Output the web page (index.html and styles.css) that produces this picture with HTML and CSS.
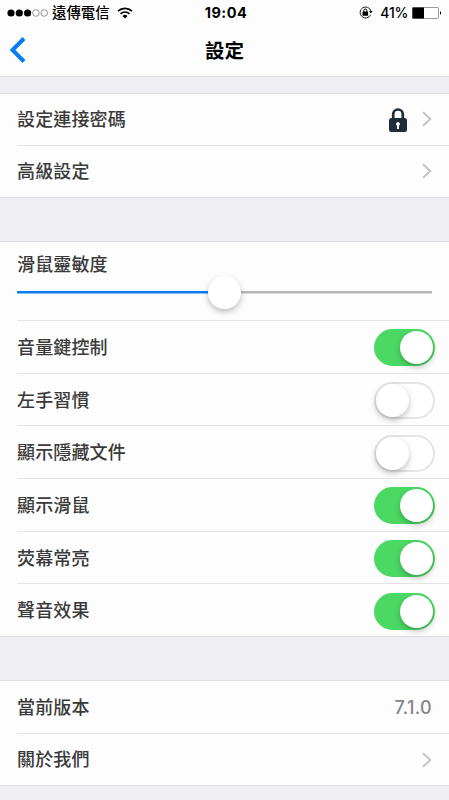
FILE: index.html
```html
<!DOCTYPE html>
<html lang="zh-Hant">
<head>
<meta charset="utf-8">
<title>設定</title>
<link rel="stylesheet" href="styles.css">
</head>
<body>
<header class="header">
  <div class="status">
    <div class="status-left">
      <svg class="signal" width="41" height="10" viewBox="0 0 41 10"><g fill="#000"><circle cx="4" cy="5" r="3.6"/><circle cx="12.3" cy="5" r="3.6"/><circle cx="20.6" cy="5" r="3.6"/></g><g fill="none" stroke="#555" stroke-width=".6"><circle cx="28.9" cy="5" r="3.3"/><circle cx="37.2" cy="5" r="3.3"/></g></svg>
      <span class="carrier">遠傳電信</span>
      <svg class="wifi" width="16" height="12" viewBox="0 0 16 12"><g fill="none" stroke="#000" stroke-width="1.6"><path d="M1 4.2a10.2 10.2 0 0 1 14 0"/><path d="M3.5 6.8a6.5 6.5 0 0 1 9 0"/></g><path d="M5.5 8.9a3.8 3.8 0 0 1 5 0L8 11.5z"/></svg>
    </div>
    <span class="time">19:04</span>
    <div class="status-right">
      <svg class="rotation" width="14" height="13" viewBox="0 0 14 13"><path d="M11.6 8.8A5.5 5.5 0 1 1 11.9 5" fill="none" stroke="#222" stroke-width="1"/><path d="M10.1 5.1h3.5l-1.7 2.4z"/><rect x="3.5" y="5.5" width="5.6" height="4.2" rx=".5"/><path d="M4.8 6V4.5a1.5 1.5 0 0 1 3 0V6" fill="none" stroke="#000"/></svg>
      <span class="percent">41%</span>
      <svg width="30" height="12" viewBox="0 0 30 12"><rect x=".5" y=".5" width="26" height="11" rx="1" fill="#fff" stroke="#555" stroke-width=".6"/><rect x=".5" y=".5" width="11.5" height="11"/><path d="M28 4.2q1.2.3 1.2 1.8T28 7.8z"/></svg>
    </div>
  </div>
  <nav class="nav">
    <svg class="back" width="18" height="28" viewBox="0 0 18 28"><path d="M15 2.5 3.5 14 15 25.5" fill="none" stroke="#087cf5" stroke-width="4"/></svg>
    <h1 class="title">設定</h1>
  </nav>
</header>
<main>
  <section class="group access">
    <div class="row"><span>設定連接密碼</span>
      <svg class="lock" width="20" height="26" viewBox="0 0 20 26"><path d="M5.2 12V7.3a4.8 4.8 0 0 1 9.6 0V12" fill="none" stroke="#202d38" stroke-width="2.7"/><rect x="1" y="11" width="18" height="14" rx="2.5" fill="#202d38"/><path d="M10 15a2 2 0 0 0-1 3.7V22h2v-3.3a2 2 0 0 0-1-3.7z" fill="#fff"/></svg>
      <svg class="chevron" width="10" height="16" viewBox="0 0 10 16"><path d="m1 1.2 7.3 6.8L1 14.8"/></svg>
    </div>
    <div class="row"><span>高級設定</span><svg class="chevron" width="10" height="16" viewBox="0 0 10 16"><path d="m1 1.2 7.3 6.8L1 14.8"/></svg></div>
  </section>
  <section class="group controls">
    <div class="row slider-row"><span>滑鼠靈敏度</span><div class="slider"><i class="knob"></i></div></div>
    <div class="row"><span>音量鍵控制</span><div class="switch on"><i class="knob"></i></div></div>
    <div class="row"><span>左手習慣</span><div class="switch"><i class="knob"></i></div></div>
    <div class="row"><span>顯示隱藏文件</span><div class="switch"><i class="knob"></i></div></div>
    <div class="row"><span>顯示滑鼠</span><div class="switch on"><i class="knob"></i></div></div>
    <div class="row"><span>荧幕常亮</span><div class="switch on"><i class="knob"></i></div></div>
    <div class="row"><span>聲音效果</span><div class="switch on"><i class="knob"></i></div></div>
  </section>
  <section class="group about">
    <div class="row"><span>當前版本</span><span class="version">7.1.0</span></div>
    <div class="row"><span>關於我們</span><svg class="chevron" width="10" height="16" viewBox="0 0 10 16"><path d="m1 1.2 7.3 6.8L1 14.8"/></svg></div>
  </section>
</main>
</body>
</html>
```
FILE: styles.css
```css
* { box-sizing: border-box; }
body {
  margin: 0;
  height: 800px;
  overflow: hidden;
  background: #eeeef3;
  color: #3a3a3a;
  font-family: Inter, "Noto Sans CJK TC", sans-serif;
  font-size: 18px;
  font-weight: 500;
  letter-spacing: .15px;
}
svg { display: block; flex: none; }
.header { height: 77px; background: #fdfdfd; border-bottom: 1px solid #dedee0; color: #000; }
.status { display: grid; grid-template-columns: 1fr auto 1fr; align-items: center; height: 25px; padding: 0 7px 0 7px; }
.status-left, .status-right { display: flex; align-items: center; }
.status-right { justify-content: flex-end; }
.carrier { margin-left: 4px; font-size: 14.4px; font-weight: 500; line-height: 24px; letter-spacing: 0; }
.wifi { margin-left: 7px; }
.time { padding-left: 3px; font-size: 14.5px; font-weight: 700; letter-spacing: .5px; }
.percent { margin: 0 4px 0 8px; font-size: 14px; font-weight: 500; letter-spacing: -.3px; }
.rotation { margin-right: -1px; }
.nav { display: grid; grid-template-columns: 1fr auto 1fr; align-items: center; height: 50px; padding: 1px 9px; }
.title { margin: 1px 0 0; font-size: 19.5px; font-weight: 700; line-height: 30px; letter-spacing: 0; }
.group { background: #fdfdfd; border: solid #dedee2; border-width: 1px 0; }
.access { height: 105px; margin-top: 16px; }
.controls { height: 396px; margin-top: 43px; }
.about { height: 106px; margin-top: 43px; }
.group { display: flex; flex-direction: column; }
.row {
  display: flex;
  flex: 1;
  align-items: center;
  min-height: 0;
  margin-left: 17px;
  padding: 1px 17px 0 0;
  line-height: 26px;
}
.row + .row { border-top: 1px solid #e4e4e6; }
.row > :nth-child(2) { margin-left: auto; }
.chevron { fill: none; stroke: #c3c3c7; stroke-width: 1.9; }
.access .chevron { margin-top: -2px; }
.lock { margin-top: -1px; }
.lock + .chevron { margin-left: 14px; }
.slider-row { display: block; flex: 0 0 78px; padding-top: 10px; }
.slider-row > span { display: block; }
.slider-row ~ .row, .about .row { padding-top: 2px; }
.row > .slider { display: flex; align-items: center; height: 34px; margin: -3px 0 0; background: linear-gradient(90deg, #087cf5 50%, #b7b7b7 50%) center / 100% 2.5px no-repeat; }
.knob { width: 33px; height: 33px; border-radius: 50%; background: #fff; box-shadow: 0 3px 6px rgba(0, 0, 0, .25); }
.slider .knob { margin-left: 191px; }
.switch { display: flex; align-items: center; width: 61px; height: 37px; margin-right: -3px; padding: 0 1px; border: 2px solid #e5e5e5; border-radius: 19px; background: #fff; }
.switch .knob { margin-left: -1px; }
.on { justify-content: flex-end; padding-right: 0; border-color: #4bd964; background: #4bd964; }
.version { color: #858589; font-size: 18px; font-weight: 500; letter-spacing: .3px; }
```
